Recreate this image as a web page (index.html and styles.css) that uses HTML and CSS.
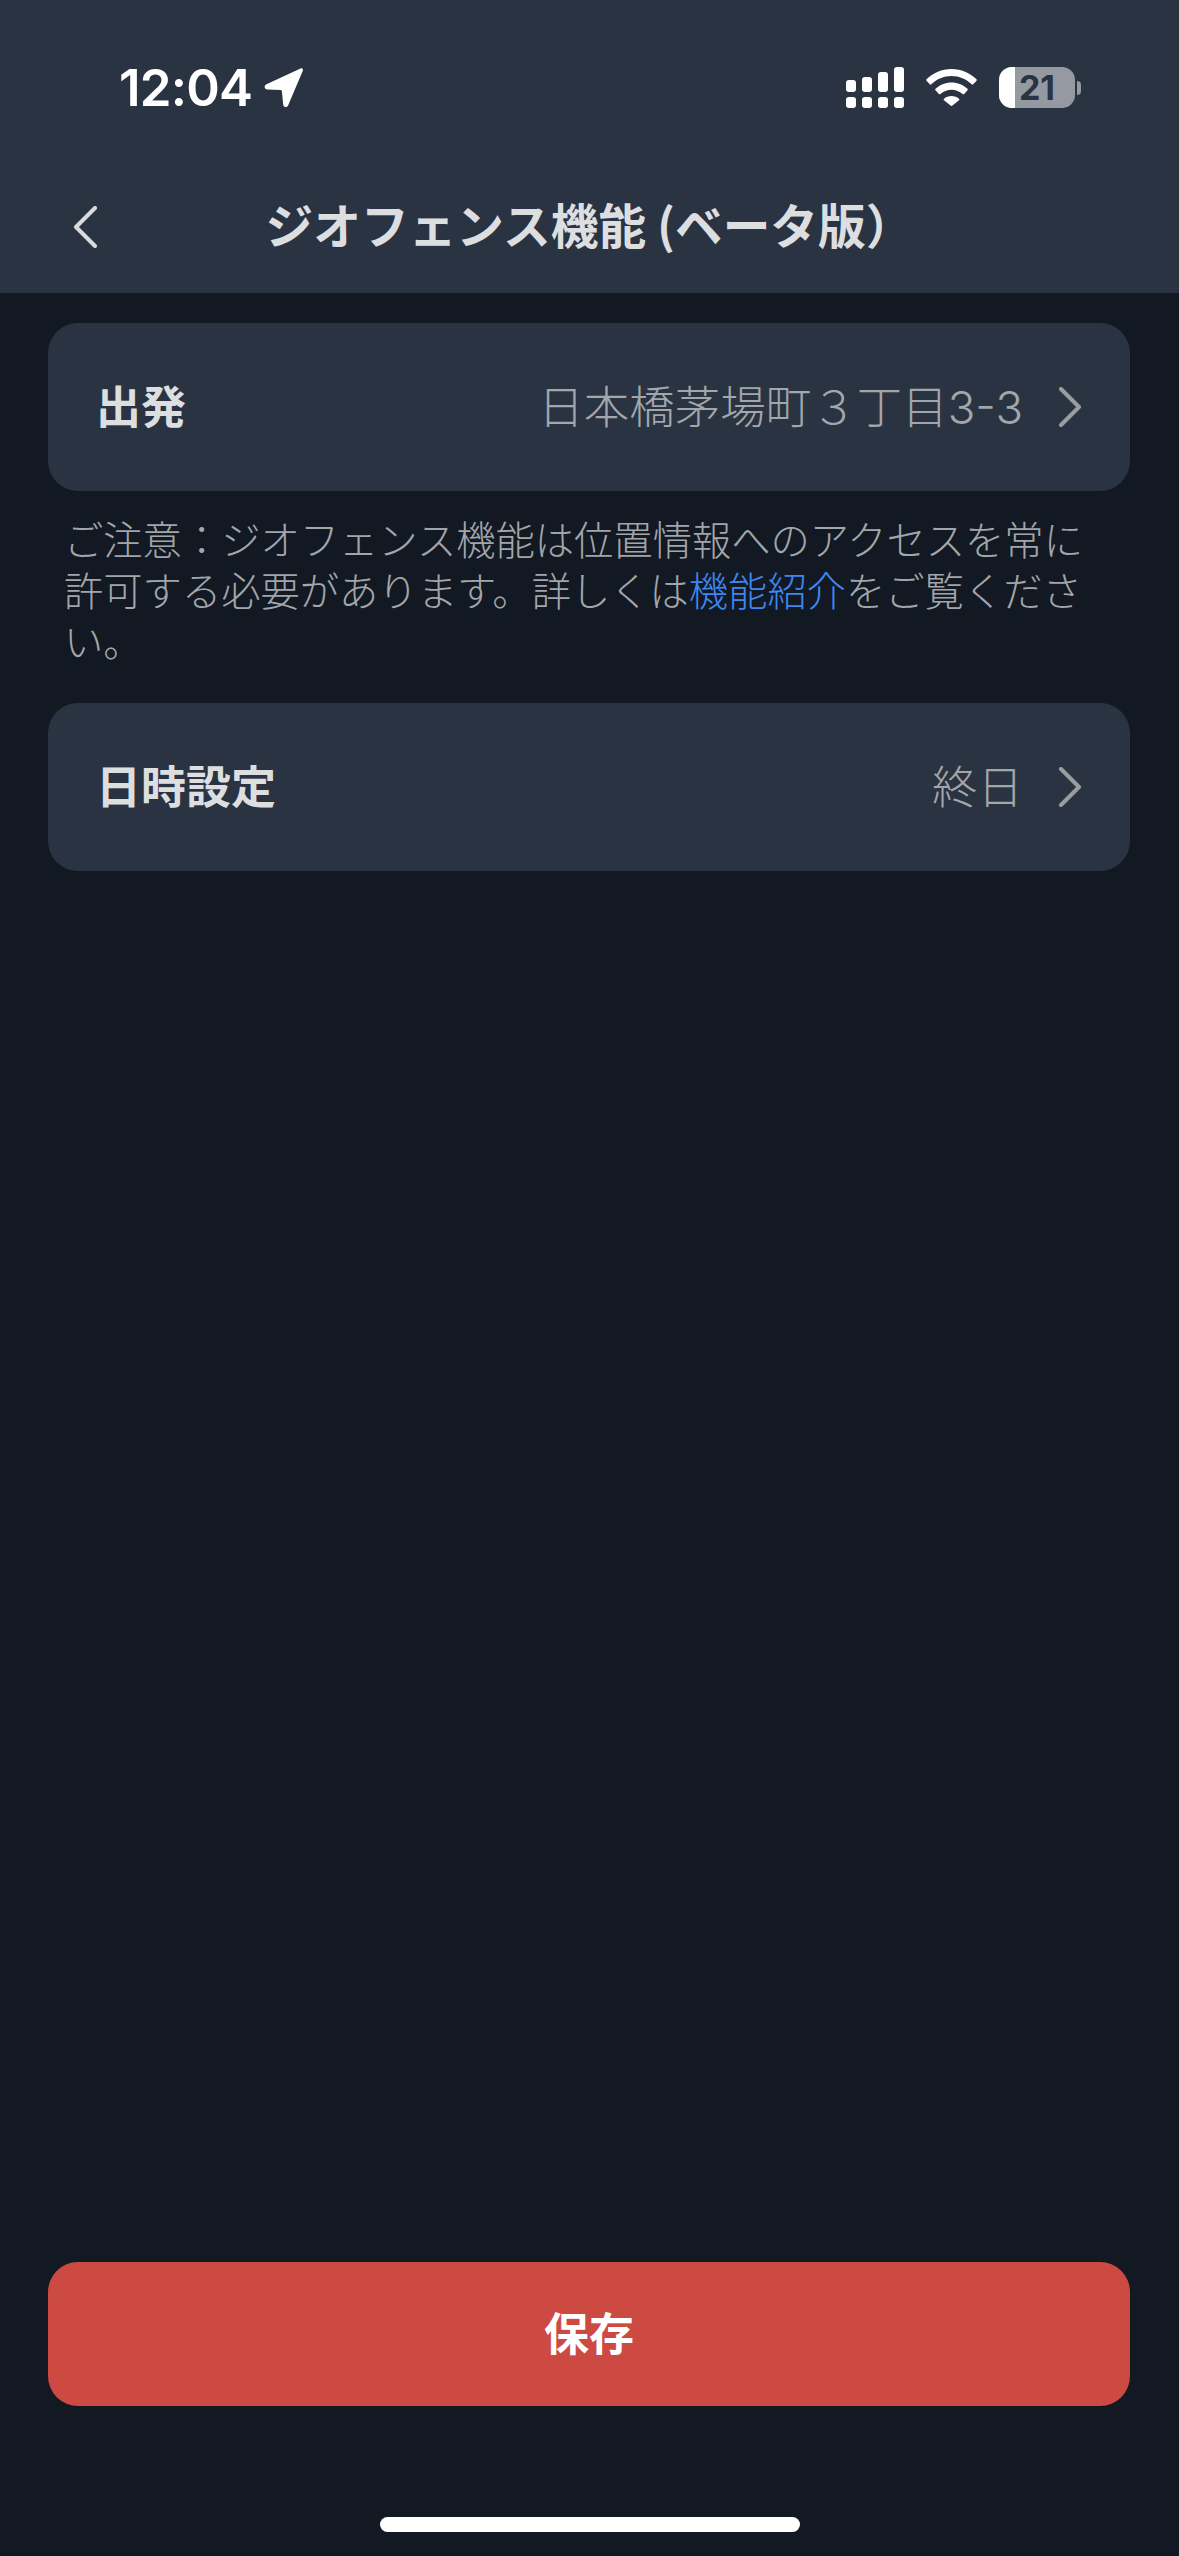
FILE: index.html
```html
<!DOCTYPE html>
<html lang="ja">
<head>
<meta charset="utf-8">
<title>ジオフェンス機能</title>
<link rel="stylesheet" href="styles.css">
</head>
<body>
<div class="screen">
  <header class="header">
    <div class="status">
      <div class="status-left">
        <span class="time">12:04</span>
        <svg class="loc" viewBox="0 0 39 39" width="39" height="39"><path d="M36.500 0.500 2.500 16.300c-3 1.500-2.200 5.200 1 5.300l13 .5c.9 0 1.300.5 1.400 1.400l1.300 13c.3 3 3.800 3.500 5 .7L38.700 3c.8-1.900-.6-3.300-2.200-2.500z" fill="#fff"/></svg>
      </div>
      <div class="status-right">
        <svg class="signal" viewBox="0 0 58 41" width="58" height="41" fill="#fff">
          <rect x="0" y="13" width="10" height="12" rx="3"/>
          <rect x="16" y="10" width="10" height="15" rx="3"/>
          <rect x="32" y="5" width="10" height="20" rx="3"/>
          <rect x="48" y="0" width="10" height="25" rx="3"/>
          <rect x="0" y="30" width="10" height="11" rx="3"/>
          <rect x="16" y="30" width="10" height="11" rx="3"/>
          <rect x="32" y="30" width="10" height="11" rx="3"/>
          <rect x="48" y="30" width="10" height="11" rx="3"/>
        </svg>
        <svg class="wifi" viewBox="0 0 51 37" width="51" height="37" fill="#fff">
          <path d="M25.500 0C15.800 0 7.200 3.800 0.500 10.200c-.5.500-.5 1 0 1.500l3.300 3.600c.5.500 1 .5 1.500 0C10.800 10 17.800 7 25.500 7s14.700 3 20.200 8.300c.5.500 1 .5 1.500 0l3.300-3.600c.5-.5.500-1 0-1.500C43.800 3.800 35.200 0 25.500 0z"/>
          <path d="M25.500 13.500c-6.200 0-11.800 2.400-16 6.300-.5.500-.5 1 0 1.500l3.400 3.600c.5.500 1 .5 1.500.1 3-2.700 6.900-4.300 11.100-4.300s8.100 1.600 11.100 4.300c.5.400 1 .4 1.500-.1l3.400-3.600c.5-.5.500-1 0-1.500-4.200-3.900-9.800-6.300-16-6.300z"/>
          <path d="M25.500 27c-2.900 0-5.500 1-7.500 2.800-.5.500-.5 1 0 1.500l6.500 5.200c.6.600 1.400.6 2 0l6.500-5.200c.5-.5.500-1 0-1.500-2-1.800-4.600-2.800-7.500-2.800z"/>
        </svg>
        <div class="battery">
          <div class="battery-body">
            <span class="battery-fill"></span>
            <span class="battery-num">21</span>
          </div>
          <span class="battery-nub"></span>
        </div>
      </div>
    </div>
    <div class="nav">
      <svg class="back" viewBox="0 0 24 42" width="24" height="42"><path d="M22 2 3 21l19 19" fill="none" stroke="#d8dadd" stroke-width="4" stroke-linecap="round" stroke-linejoin="round"/></svg>
      <h1 class="title">ジオフェンス機能 (ベータ版）</h1>
    </div>
  </header>

  <main class="content">
    <div class="row">
      <span class="label">出発</span>
      <span class="value">日本橋茅場町３丁目3-3</span>
      <svg class="chev" viewBox="0 0 24 40" width="24" height="40"><path d="M3 2l18 18L3 38" fill="none" stroke="#9a9c9f" stroke-width="4" stroke-linecap="round" stroke-linejoin="round"/></svg>
    </div>
    <p class="note">ご注意：ジオフェンス機能は位置情報へのアクセスを常に許可する必要があります。詳しくは<a class="link">機能紹介</a>をご覧ください。</p>
    <div class="row">
      <span class="label">日時設定</span>
      <span class="value">終日</span>
      <svg class="chev" viewBox="0 0 24 40" width="24" height="40"><path d="M3 2l18 18L3 38" fill="none" stroke="#9a9c9f" stroke-width="4" stroke-linecap="round" stroke-linejoin="round"/></svg>
    </div>
    <button class="save">保存</button>
  </main>

  <div class="home-wrap"><span class="home"></span></div>
</div>
</body>
</html>
```
FILE: styles.css
```css
* { box-sizing: border-box; }
html, body { margin: 0; padding: 0; background: #121923; }
body { font-family: "Noto Sans CJK JP", "Noto Sans", sans-serif; }
.screen { width: 1179px; height: 2556px; display: flex; flex-direction: column; background: #121923; overflow: hidden; }

.header { height: 293px; background: #2a3342; display: flex; flex-direction: column; flex: none; }
.status { height: 170px; padding: 67px 98px 0 119px; display: flex; justify-content: space-between; align-items: flex-start; flex: none; }
.status-left { display: flex; align-items: center; gap: 12px; }
.time { font-family: Inter, "Liberation Sans", sans-serif; font-weight: 600; font-size: 51px; line-height: 41px; color: #fff; letter-spacing: -0.8px; }
.status-right { display: flex; align-items: center; gap: 22px; }
.signal, .wifi { display: block; }
.battery { display: flex; align-items: center; gap: 2px; }
.battery-body { position: relative; width: 76px; height: 41px; border-radius: 13px; background: #9499a2; overflow: hidden; display: flex; align-items: center; justify-content: center; }
.battery-fill { position: absolute; left: 0; top: 0; bottom: 0; width: 16px; background: #fff; }
.battery-num { position: relative; font-family: Inter, "Liberation Sans", sans-serif; font-weight: 700; font-size: 34px; line-height: 41px; color: #2a3342; }
.battery-nub { width: 4px; height: 14px; background: #9499a2; border-radius: 0 4px 4px 0; }

.nav { flex: 1; display: flex; align-items: center; justify-content: center; position: relative; padding-bottom: 15px; }
.back { position: absolute; left: 73px; top: 36px; }
.title { margin: 0; font-size: 47.7px; line-height: 60px; font-weight: 600; color: #dcdee0; white-space: nowrap; }

.content { flex: 1; display: flex; flex-direction: column; padding: 30px 49px 0 48px; }
.row { height: 168px; flex: none; border-radius: 30px; background: #2a3342; display: flex; align-items: center; padding: 0 48px; }
.label { font-size: 45px; font-weight: 700; color: #dcdee0; padding-bottom: 6px; }
.value { margin-left: auto; font-family: Inter, "Noto Sans CJK JP", sans-serif; font-size: 45.5px; font-weight: 300; color: #a3a6aa; padding-bottom: 6px; }
.chev { margin-left: 35px; flex: none; }
.note { margin: 21px 0 38px; padding: 0 15px 0 16px; font-size: 39.3px; line-height: 51px; font-weight: 300; color: #a2a6ab; }
.link { color: #3f86f0; }
.save { margin-top: auto; height: 144px; width: 100%; flex: none; border: 0; border-radius: 30px; padding: 0 0 6px; background: #cd4a43; color: #fff; font-family: inherit; font-size: 45px; font-weight: 700; }

.home-wrap { height: 150px; flex: none; display: flex; justify-content: center; padding-top: 111px; }
.home { width: 420px; height: 15px; border-radius: 8px; background: #fff; display: block; }
```
